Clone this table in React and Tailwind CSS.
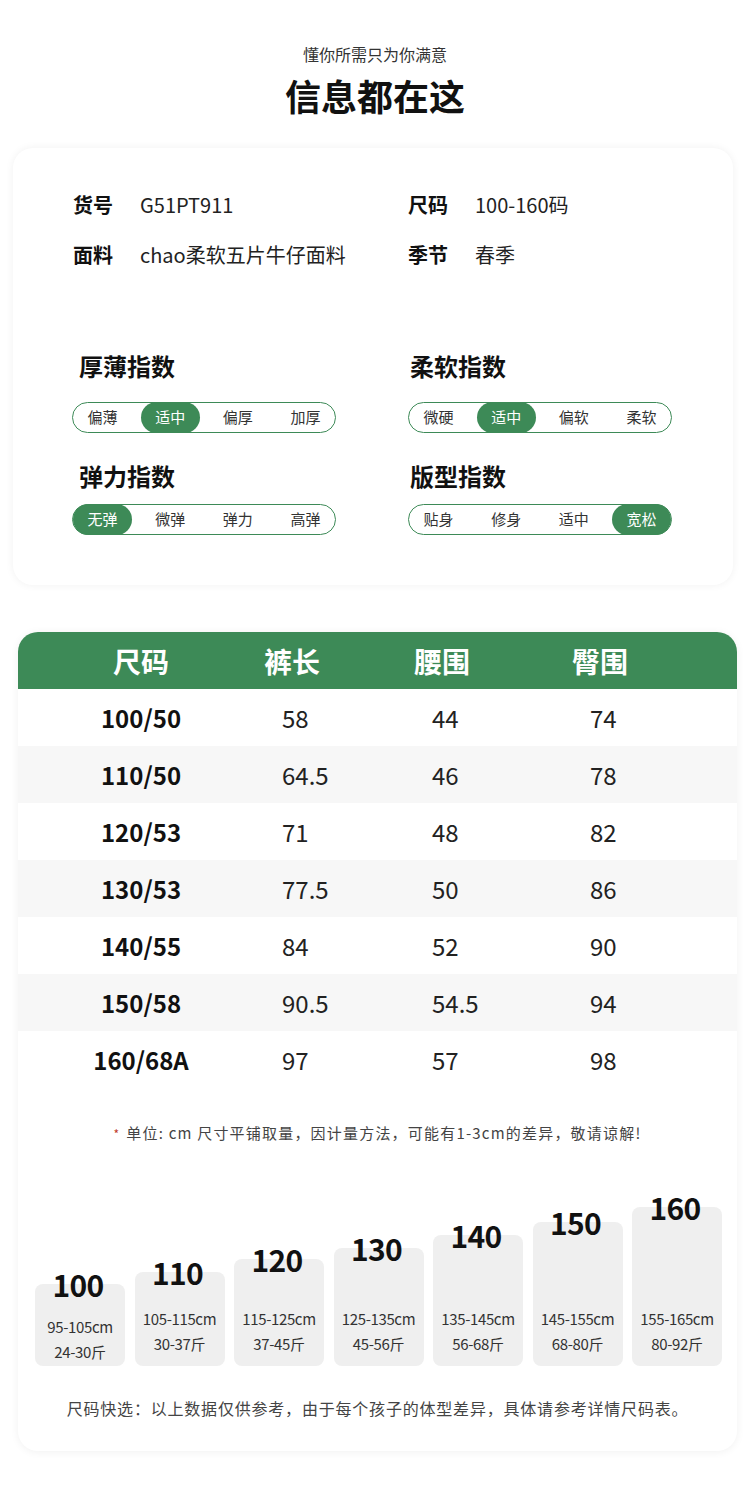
import React from "react";

const GREEN = "bg-[#3d8a57]";

const info = [
  [
    ["货号", "G51PT911"],
    ["尺码", "100-160码"],
  ],
  [
    ["面料", "chao柔软五片牛仔面料"],
    ["季节", "春季"],
  ],
];

const indexes = [
  { title: "厚薄指数", options: ["偏薄", "适中", "偏厚", "加厚"], active: 1 },
  { title: "柔软指数", options: ["微硬", "适中", "偏软", "柔软"], active: 1 },
  { title: "弹力指数", options: ["无弹", "微弹", "弹力", "高弹"], active: 0 },
  { title: "版型指数", options: ["贴身", "修身", "适中", "宽松"], active: 3 },
];

const rows = [
  ["100/50", "58", "44", "74"],
  ["110/50", "64.5", "46", "78"],
  ["120/53", "71", "48", "82"],
  ["130/53", "77.5", "50", "86"],
  ["140/55", "84", "52", "90"],
  ["150/58", "90.5", "54.5", "94"],
  ["160/68A", "97", "57", "98"],
];

const bars = [
  { size: "100", h: "h-[82px]", pb: "pb-[2px]", height: "95-105cm", weight: "24-30斤" },
  { size: "110", h: "h-[94px]", pb: "pb-[10px]", height: "105-115cm", weight: "30-37斤" },
  { size: "120", h: "h-[107px]", pb: "pb-[10px]", height: "115-125cm", weight: "37-45斤" },
  { size: "130", h: "h-[118px]", pb: "pb-[10px]", height: "125-135cm", weight: "45-56斤" },
  { size: "140", h: "h-[131px]", pb: "pb-[10px]", height: "135-145cm", weight: "56-68斤" },
  { size: "150", h: "h-[144px]", pb: "pb-[10px]", height: "145-155cm", weight: "68-80斤" },
  { size: "160", h: "h-[159px]", pb: "pb-[10px]", height: "155-165cm", weight: "80-92斤" },
];

const Pill = ({ options, active }) => (
  <div className="w-[264px] h-[31px] rounded-full border border-[#3d8a57] flex justify-between items-stretch">
    {options.map((opt, i) => (
      <div
        key={opt}
        className={
          i === active
            ? `w-[59px] -my-px rounded-full ${GREEN} text-white flex items-center justify-center text-[15px]`
            : "w-[59px] flex items-center justify-center text-[15px] text-[#333]"
        }
      >
        {opt}
      </div>
    ))}
  </div>
);

export default function App() {
  return (
    <div
      className="w-[750px] min-h-[1506px] bg-white pt-[42px] pb-[55px]"
      style={{ fontFamily: '"Noto Sans CJK SC", "Noto Sans", sans-serif' }}
    >
      {/* TITLE */}
      <div className="text-center text-[16px] leading-[24px] text-[#333]">懂你所需只为你满意</div>
      <div className="mt-[7px] text-center text-[36px] leading-[44px] font-bold text-[#111]">信息都在这</div>

      {/* INFO CARD */}
      <div className="mt-[31px] ml-[13px] w-[720px] rounded-[20px] bg-white shadow-[0_0_8px_rgba(0,0,0,0.06)] pl-[60px] pt-[43px] pb-[50px]">
        <div className="flex flex-col gap-[22px]">
          {info.map((line, r) => (
            <div key={r} className="grid grid-cols-[335px_1fr]">
              {line.map(([k, v]) => (
                <div key={k} className="flex items-center h-[28px] text-[20px]">
                  <span className="w-[67px] font-bold text-[#111]">{k}</span>
                  <span className="text-[#222]">{v}</span>
                </div>
              ))}
            </div>
          ))}
        </div>

        <div className="mt-[81px] grid grid-cols-[335px_1fr] gap-y-[27px]">
          {indexes.map((ix, i) => (
            <div key={ix.title} className="flex flex-col">
              <div
                className={`text-[24px] leading-[32px] font-bold text-[#111] ${
                  i % 2 === 0 ? "pl-[6px]" : "pl-[2px]"
                }`}
              >
                {ix.title}
              </div>
              <div className={`${i < 2 ? "mt-[20px]" : "mt-[12px]"} ${i % 2 === 0 ? "-ml-px" : ""}`}>
                <Pill options={ix.options} active={ix.active} />
              </div>
            </div>
          ))}
        </div>
      </div>

      {/* SIZE TABLE CARD */}
      <div className="mt-[47px] ml-[18px] w-[719px] rounded-[20px] bg-white shadow-[0_1px_8px_rgba(0,0,0,0.06)] pb-[31px]">
        <div className={`h-[57px] rounded-t-[20px] ${GREEN} grid grid-cols-[246px_150px_158px_1fr] items-center text-white text-[28px] font-bold`}>
          <div className="text-center">尺码</div>
          <div>裤长</div>
          <div>腰围</div>
          <div>臀围</div>
        </div>

        {rows.map((row, i) => (
          <div
            key={row[0]}
            className={`h-[57px] grid grid-cols-[246px_150px_158px_1fr] items-center text-[24px] ${
              i % 2 === 1 ? "bg-[#f7f7f7]" : "bg-white"
            }`}
          >
            <div className="text-center font-bold text-[#111]">{row[0]}</div>
            <div className="pl-[18px] text-[#222]">{row[1]}</div>
            <div className="pl-[18px] text-[#222]">{row[2]}</div>
            <div className="pl-[18px] text-[#222]">{row[3]}</div>
          </div>
        ))}

        <div className="mt-[33px] text-center text-[15px] leading-[24px] text-[#444] tracking-[1.2px]">
          <span className="text-[#c0392b] text-[12px] mr-[6px]">*</span>
          单位: cm 尺寸平铺取量，因计量方法，可能有1-3cm的差异，敬请谅解!
        </div>

        <div className="mt-[2px] ml-[17px] w-[687px] h-[218px] flex items-end gap-[9.5px]">
          {bars.map((b) => (
            <div
              key={b.size}
              className={`w-[90px] ${b.h} rounded-[8px] bg-[#efefef] flex flex-col items-center`}
            >
              <div className="-mt-[17px] h-[34px] leading-[34px] text-[30px] font-bold text-[#111] tracking-tight -translate-x-[2px]">
                {b.size}
              </div>
              <div className={`mt-auto ${b.pb} flex flex-col items-center text-[15px] leading-[25px] text-[#333] tracking-tight`}>
                <span>{b.height}</span>
                <span>{b.weight}</span>
              </div>
            </div>
          ))}
        </div>

        <div className="mt-[30px] text-center text-[16px] leading-[24px] text-[#444] tracking-[0.8px]">
          尺码快选：以上数据仅供参考，由于每个孩子的体型差异，具体请参考详情尺码表。
        </div>
      </div>
    </div>
  );
}
